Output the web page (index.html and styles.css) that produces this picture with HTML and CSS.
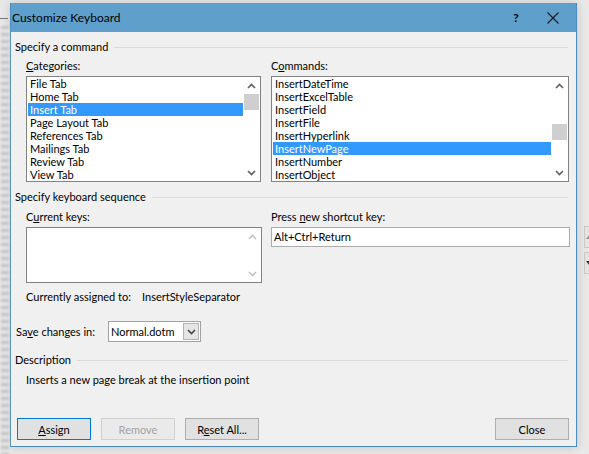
FILE: index.html
```html
<!DOCTYPE html>
<html lang="en">
<head>
<meta charset="UTF-8" />
<title>Customize Keyboard</title>
<link rel="stylesheet" href="styles.css">
</head>
<body>
<div class="screen">
  <span class="bg-dash"></span>
  <div class="bg-spin bg-spin-up"><span class="tri-up"></span></div>
  <div class="bg-spin bg-spin-down"><span class="tri-down"></span></div>

  <div class="dialog">
    <div class="titlebar">
      <span class="title">Customize Keyboard</span>
      <span class="help">?</span>
      <svg class="close" width="12" height="12" viewBox="0 0 12 12">
        <path d="M0.5 0.5 L11.5 11.5 M11.5 0.5 L0.5 11.5" stroke="#1a1a1a" stroke-width="1.1" fill="none"/>
      </svg>
    </div>

    <div class="content">
      <div class="group-title">Specify a command</div>
      <div class="cols cols-top">
        <div class="field">
          <label><u>C</u>ategories:</label>
          <div class="listbox listbox-left">
            <ul>
              <li>File Tab</li>
              <li>Home Tab</li>
              <li class="sel">Insert Tab</li>
              <li>Page Layout Tab</li>
              <li>References Tab</li>
              <li>Mailings Tab</li>
              <li>Review Tab</li>
              <li>View Tab</li>
            </ul>
            <div class="vscroll">
              <div class="arrow"><svg width="9" height="6" viewBox="0 0 9 6"><path d="M1 5 L4.5 1.5 L8 5" stroke="#606060" stroke-width="1.6" fill="none"/></svg></div>
              <div class="track"><div class="thumb"></div></div>
              <div class="arrow"><svg width="9" height="6" viewBox="0 0 9 6"><path d="M1 1 L4.5 4.5 L8 1" stroke="#606060" stroke-width="1.6" fill="none"/></svg></div>
            </div>
          </div>
        </div>
        <div class="field">
          <label>C<u>o</u>mmands:</label>
          <div class="listbox listbox-right">
            <ul>
              <li>InsertDateTime</li>
              <li>InsertExcelTable</li>
              <li>InsertField</li>
              <li>InsertFile</li>
              <li>InsertHyperlink</li>
              <li class="sel">InsertNewPage</li>
              <li>InsertNumber</li>
              <li>InsertObject</li>
            </ul>
            <div class="vscroll">
              <div class="arrow"><svg width="9" height="6" viewBox="0 0 9 6"><path d="M1 5 L4.5 1.5 L8 5" stroke="#606060" stroke-width="1.6" fill="none"/></svg></div>
              <div class="track"><div class="thumb" style="margin-top:30px"></div></div>
              <div class="arrow"><svg width="9" height="6" viewBox="0 0 9 6"><path d="M1 1 L4.5 4.5 L8 1" stroke="#606060" stroke-width="1.6" fill="none"/></svg></div>
            </div>
          </div>
        </div>
      </div>

      <div class="group-title group-gap">Specify keyboard sequence</div>
      <div class="cols cols-keys">
        <div class="field">
          <label>C<u>u</u>rrent keys:</label>
          <div class="keysbox">
            <div class="keys-list"></div>
            <div class="vscroll">
              <div class="arrow"><svg width="9" height="6" viewBox="0 0 9 6"><path d="M1 5 L4.5 1.5 L8 5" stroke="#c4c4c4" stroke-width="1.6" fill="none"/></svg></div>
              <div class="track"></div>
              <div class="arrow"><svg width="9" height="6" viewBox="0 0 9 6"><path d="M1 1 L4.5 4.5 L8 1" stroke="#c4c4c4" stroke-width="1.6" fill="none"/></svg></div>
            </div>
          </div>
        </div>
        <div class="field">
          <label>Press <u>n</u>ew shortcut key:</label>
          <div class="textbox">Alt+Ctrl+Return</div>
        </div>
      </div>
      <div class="assigned">
        <span class="assigned-label">Currently assigned to:</span>
        <span>InsertStyleSeparator</span>
      </div>

      <div class="save-row">
        <span class="save-label">Sa<u>v</u>e changes in:</span>
        <div class="combo">
          <span class="combo-value">Normal.dotm</span>
          <span class="combo-btn"><svg width="9" height="6" viewBox="0 0 9 6"><path d="M1 1 L4.5 4.5 L8 1" stroke="#444" stroke-width="1.6" fill="none"/></svg></span>
        </div>
      </div>

      <div class="group-title desc-title">Description</div>
      <div class="desc-text">Inserts a new page break at the insertion point</div>

      <div class="buttons">
        <button class="btn btn-default"><u>A</u>ssign</button>
        <button class="btn" disabled>Remove</button>
        <button class="btn">R<u>e</u>set All...</button>
        <button class="btn btn-close">Close</button>
      </div>
    </div>
  </div>
</div>
</body>
</html>
```

FILE: styles.css
```css
body {
  margin: 0;
  font-family: Lato, "Liberation Sans", sans-serif;
  font-size: 11px;
  color: #000;
  white-space: nowrap;
}
.screen {
  position: relative;
  width: 589px;
  height: 454px;
  overflow: hidden;
  background: #e8e8e8;
  padding: 3px 0 0 10px;
  box-sizing: border-box;
}
/* blurred window behind the dialog */
.screen::before {
  content: "";
  position: absolute;
  left: 1px;
  top: 26px;
  width: 8px;
  height: 430px;
  background: repeating-linear-gradient(to bottom, #c4c4c4 0 3px, #e2e2e2 3px 7px);
  filter: blur(1px);
}
.bg-dash {
  position: absolute;
  left: 0;
  top: 18px;
  width: 8px;
  height: 1px;
  background: #777;
}
.bg-spin {
  position: absolute;
  left: 584px;
  width: 12px;
  height: 20px;
  border: 1px solid #c8c8c8;
  background: #e4e4e4;
  display: flex;
  align-items: center;
  padding-left: 1px;
}
.bg-spin-up { top: 226px; }
.bg-spin-down { top: 252px; }
.tri-up {
  border: 3px solid transparent;
  border-bottom: 4px solid #999;
  border-top: none;
}
.tri-down {
  border: 3px solid transparent;
  border-top: 4px solid #333;
  border-bottom: none;
}

.dialog {
  width: 567px;
  height: 444px;
  box-sizing: border-box;
  border: 1px solid #4d8bc0;
  border-top: none;
  background: #f0f0f0;
  display: flex;
  flex-direction: column;
  box-shadow: 0 0 9px rgba(0, 0, 0, 0.16);
}
.titlebar {
  height: 29px;
  flex: none;
  background: #5e9fcc;
  display: flex;
  align-items: center;
  padding-left: 1px;
  font-size: 12px;
}
.title {
  flex: 1;
}
.help {
  width: 14px;
  text-align: center;
  font-weight: bold;
  margin-right: 24px;
}
.close {
  margin-right: 17px;
}

.content {
  flex: 1;
  display: flex;
  flex-direction: column;
  padding: 7px 6px 6px 4px;
}
.group-title {
  display: flex;
  align-items: center;
  height: 16px;
  line-height: 16px;
}
.group-title::after {
  content: "";
  flex: 1;
  border-top: 1px solid #dadada;
  margin: 1px 2px 0 6px;
}
.group-gap { margin-top: 7px; }

.cols {
  display: grid;
  grid-template-columns: 236px 299px;
  column-gap: 9px;
  padding-left: 11px;
}
.cols-top { margin-top: 3px; }
.cols-keys { margin-top: 4px; }
label {
  display: block;
  line-height: 16px;
  margin-bottom: 2px;
}

.listbox {
  height: 106px;
  box-sizing: border-box;
  border: 1px solid #828282;
  background: #fff;
  display: flex;
}
.listbox-left { width: 235px; }
.listbox-right { width: 298px; }
.listbox ul {
  flex: 1;
  list-style: none;
  margin: 0;
  padding: 0 0 0 1px;
}
.listbox li {
  height: 13px;
  line-height: 13px;
  padding-left: 2px;
}
.listbox li.sel {
  background: #3399ff;
  color: #fff;
}
.vscroll {
  width: 17px;
  display: flex;
  flex-direction: column;
}
.arrow {
  height: 17px;
  display: flex;
  align-items: center;
  justify-content: center;
}
.track { flex: 1; }
.thumb {
  height: 16px;
  margin: 0 1px;
  background: #cfcfcf;
}

.keysbox {
  height: 56px;
  box-sizing: border-box;
  border: 1px solid #828282;
  background: #fff;
  display: flex;
}
.keys-list { flex: 1; }
.textbox {
  height: 20px;
  box-sizing: border-box;
  border: 1px solid #acacac;
  background: #fff;
  line-height: 18px;
  padding-left: 2px;
}

.assigned {
  display: flex;
  margin-top: 6px;
  padding-left: 11px;
  line-height: 16px;
}
.assigned-label { width: 116px; }

.save-row {
  display: flex;
  align-items: center;
  margin-top: 16px;
  padding-left: 1px;
}
.save-label { width: 92px; }
.combo {
  width: 93px;
  height: 21px;
  box-sizing: border-box;
  border: 1px solid #a2a2a2;
  background: #fff;
  display: flex;
  align-items: center;
}
.combo-value {
  flex: 1;
  padding-left: 2px;
}
.combo-btn {
  width: 16px;
  height: 17px;
  margin-right: 1px;
  box-sizing: border-box;
  border: 1px solid #b4b4b4;
  background: #e5e5e5;
  display: flex;
  align-items: center;
  justify-content: center;
}

.desc-title { margin-top: 10px; }
.desc-text {
  margin-top: 4px;
  padding-left: 11px;
  line-height: 16px;
}

.buttons {
  margin-top: auto;
  display: flex;
  padding-left: 2px;
  padding-right: 1px;
}
.btn {
  width: 74px;
  height: 22px;
  margin-right: 10px;
  border: 1px solid #adadad;
  background: #e1e1e1;
  font-family: inherit;
  font-size: 11px;
  color: #000;
  padding: 0;
}
.btn-default { border-color: #0078d7; }
.btn:disabled {
  border-color: #d0d0d0;
  background: #eaeaea;
  color: #a3a3a3;
}
.btn-close {
  margin-left: auto;
  margin-right: 0;
}
```
